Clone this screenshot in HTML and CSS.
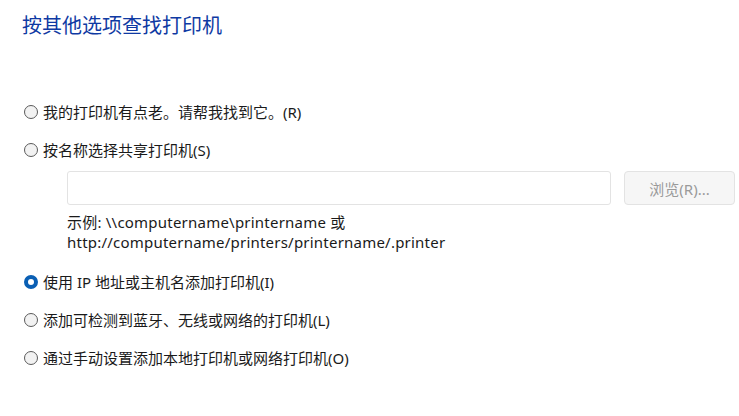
FILE: index.html
```html
<!DOCTYPE html>
<html lang="zh-CN">
<head>
<meta charset="utf-8">
<title>添加打印机</title>
<link rel="stylesheet" href="styles.css">
</head>
<body>
<div class="page">
  <h1 class="title">按其他选项查找打印机</h1>
  <div class="options">
    <label class="opt"><span class="radio"></span><span>我的打印机有点老。请帮我找到它。(R)</span></label>
    <label class="opt"><span class="radio"></span><span>按名称选择共享打印机(S)</span></label>
    <div class="share">
      <div class="share-row">
        <div class="input"></div>
        <div class="btn">浏览(R)...</div>
      </div>
      <div class="example">示例: \\computername\printername 或<br>http://computername/printers/printername/.printer</div>
    </div>
    <label class="opt first-after"><span class="radio checked"></span><span>使用 IP 地址或主机名添加打印机(I)</span></label>
    <label class="opt"><span class="radio"></span><span>添加可检测到蓝牙、无线或网络的打印机(L)</span></label>
    <label class="opt"><span class="radio"></span><span>通过手动设置添加本地打印机或网络打印机(O)</span></label>
  </div>
</div>
</body>
</html>
```
FILE: styles.css
```css
html, body {
  margin: 0;
  padding: 0;
  background: #ffffff;
}
body {
  font-family: "Noto Sans", "Noto Sans CJK SC", sans-serif;
  color: #1a1a1a;
  font-size: 15px;
  width: 739px;
  height: 416px;
  overflow: hidden;
}
.page {
  padding: 11px 0 0 22px;
}
.title {
  margin: 0;
  font-size: 20px;
  line-height: 28px;
  font-weight: normal;
  color: #0f3aa3;
  font-family: "Noto Sans CJK SC", sans-serif;
}
.options {
  margin-top: 54px;
  display: flex;
  flex-direction: column;
}
.opt {
  height: 38px;
  display: flex;
  align-items: center;
  gap: 5px;
  line-height: 20px;
}
.radio {
  width: 12px;
  height: 12px;
  border: 1px solid #5a5a5a;
  border-radius: 50%;
  background: #f2f2f2;
  flex: none;
  margin-left: 2px;
}
.radio.checked {
  width: 6px;
  height: 6px;
  border: 4px solid #0a5fb4;
  background: #ffffff;
}
.share {
  padding-left: 45px;
  margin-top: 2px;
}
.share-row {
  display: flex;
  gap: 13px;
}
.input {
  width: 542px;
  height: 32px;
  border: 1px solid #e3e3e3;
  border-radius: 3px;
  background: #fff;
}
.btn {
  width: 109px;
  height: 32px;
  border: 1px solid #e3e3e3;
  border-radius: 4px;
  background: #f6f6f6;
  color: #9a9a9a;
  display: flex;
  align-items: center;
  justify-content: center;
  font-size: 15px;
}
.example {
  margin-top: 7px;
  line-height: 20px;
  letter-spacing: 0.22px;
}
.first-after {
  margin-top: 11px;
}
```
